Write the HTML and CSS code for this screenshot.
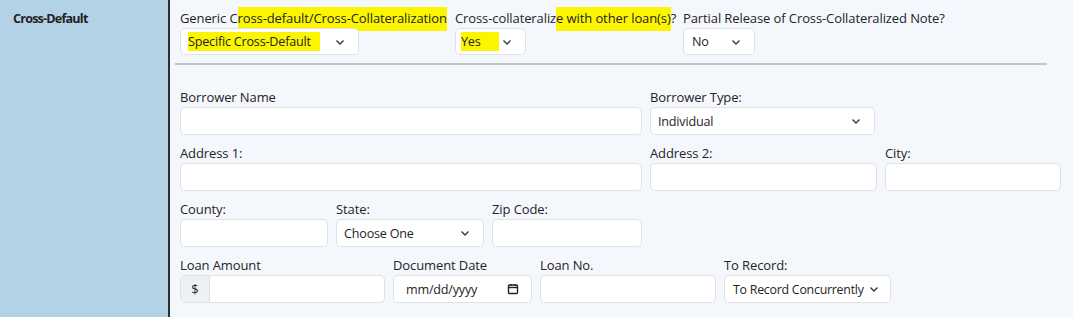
FILE: index.html
```html
<!DOCTYPE html>
<html>
<head>
<meta charset="utf-8">
<link rel="stylesheet" href="styles.css">
</head>
<body>
<div class="row-wrap">
  <div class="side"><span class="side-title">Cross-Default</span></div>
  <div class="main">
    <div class="top">
      <div class="fld w1">
        <div class="lbl">Generic C<mark class="hl hl-a">ross-default/Cross-Collateralization</mark></div>
        <div class="sel s1"><mark class="hl hl-in">Specific Cross-Default&nbsp;&nbsp;&nbsp;</mark><svg class="chev" viewBox="0 0 12 12"><path d="M2.5 4.5 6 8l3.5-3.5"/></svg></div>
      </div>
      <div class="fld w2">
        <div class="lbl">Cross-collateraliz<mark class="hl hl-b">e with other loan(s)</mark>?</div>
        <div class="sel s2"><mark class="hl hl-in">Yes&nbsp;&nbsp;&nbsp;&nbsp;&nbsp;&nbsp;</mark><svg class="chev" viewBox="0 0 12 12"><path d="M2.5 4.5 6 8l3.5-3.5"/></svg></div>
      </div>
      <div class="fld">
        <div class="lbl">Partial Release of Cross-Collateralized Note?</div>
        <div class="sel s3"><span>No</span><svg class="chev" viewBox="0 0 12 12"><path d="M2.5 4.5 6 8l3.5-3.5"/></svg></div>
      </div>
    </div>
    <hr class="rule">
    <div class="grid">
      <div class="frow">
        <div class="fld" style="width:462px"><div class="lbl">Borrower Name</div><div class="inp"></div></div>
        <div class="fld" style="width:225px"><div class="lbl">Borrower Type:</div><div class="sel"><span>Individual</span><svg class="chev" viewBox="0 0 12 12"><path d="M2.5 4.5 6 8l3.5-3.5"/></svg></div></div>
      </div>
      <div class="frow">
        <div class="fld" style="width:462px"><div class="lbl">Address 1:</div><div class="inp"></div></div>
        <div class="fld" style="width:227px"><div class="lbl">Address 2:</div><div class="inp"></div></div>
        <div class="fld" style="width:176px"><div class="lbl">City:</div><div class="inp"></div></div>
      </div>
      <div class="frow">
        <div class="fld" style="width:148px"><div class="lbl">County:</div><div class="inp"></div></div>
        <div class="fld" style="width:148px"><div class="lbl">State:</div><div class="sel"><span>Choose One</span><svg class="chev" viewBox="0 0 12 12"><path d="M2.5 4.5 6 8l3.5-3.5"/></svg></div></div>
        <div class="fld" style="width:150px"><div class="lbl">Zip Code:</div><div class="inp"></div></div>
      </div>
      <div class="frow">
        <div class="fld" style="width:205px"><div class="lbl">Loan Amount</div><div class="igroup"><span class="addon">$</span><span class="ig-inp"></span></div></div>
        <div class="fld" style="width:139px"><div class="lbl">Document Date</div><div class="inp date"><span>mm/dd/yyyy</span><svg class="cal" viewBox="0 0 12 12"><rect x="1.5" y="2" width="9" height="8.5" rx="1"/><path d="M1.5 4.5h9"/><path d="M4 1v2M8 1v2"/></svg></div></div>
        <div class="fld" style="width:176px"><div class="lbl">Loan No.</div><div class="inp"></div></div>
        <div class="fld" style="width:167px"><div class="lbl">To Record:</div><div class="sel s-rec"><span>To Record Concurrently</span><svg class="chev" viewBox="0 0 12 12"><path d="M2.5 4.5 6 8l3.5-3.5"/></svg></div></div>
      </div>
    </div>
  </div>
</div>
</body>
</html>
```
FILE: styles.css
```css
* { box-sizing: border-box; }
html, body { margin: 0; padding: 0; }
body {
  font-family: "Open Sans", "Noto Sans", sans-serif;
  font-size: 13px;
  color: #1f2327;
  background: #f4f8fc;
  width: 1073px;
  height: 317px;
  overflow: hidden;
}
.row-wrap { display: flex; height: 317px; }
.side {
  width: 170px;
  background: #b3d2e5;
  border-right: 2px solid #2b2f33;
  padding: 9px 13px;
  flex: none;
}
.side-title { font-weight: 700; font-size: 12.6px; line-height: 20px; letter-spacing: -0.8px; }
.main { flex: 1; padding: 8px 11px 0 10px; }
.top { display: flex; gap: 8px; }
.w1 { width: 267px; }
.w2 { width: 220px; }
.lbl { line-height: 20px; white-space: nowrap; letter-spacing: -0.1px; }
.hl { background: #fbf500; color: inherit; }
.hl-a { padding: 2px 0 4px; }
.hl-b { padding: 2px 0 4px; }
.hl-in { padding: 1px 0; }
.sel, .inp {
  height: 27px;
  background: #fff;
  border: 1px solid #dee2e6;
  border-radius: 5px;
  display: flex;
  align-items: center;
  justify-content: space-between;
  padding: 0 12px 0 7px;
  font-size: 12.6px;
  letter-spacing: -0.2px;
  white-space: nowrap;
}
.s1 { width: 179px; }
.s2 { width: 71px; padding-left: 5px; }
.s3 { width: 72px; padding-left: 8px; }
.s-rec { padding: 0 10px 0 8px; font-size: 12.4px; letter-spacing: -0.25px; }
.chev { width: 12px; height: 12px; fill: none; stroke: #343a40; stroke-width: 1.4; flex: none; }
.rule { border: 0; border-top: 2px solid #c3c6c9; margin: 8px 15px 0 -5px; }
.grid { display: flex; flex-direction: column; gap: 8px; padding-top: 22px; }
.frow { display: flex; gap: 8px; }
.fld { display: flex; flex-direction: column; flex: none; }
.frow .inp, .frow .sel, .igroup { height: 28px; }
.igroup {
  display: flex;
  border: 1px solid #dee2e6;
  border-radius: 5px;
  overflow: hidden;
  background: #fff;
}
.addon {
  width: 29px;
  background: #eef1f4;
  border-right: 1px solid #dee2e6;
  display: flex;
  align-items: center;
  justify-content: center;
}
.ig-inp { flex: 1; }
.date { padding: 0 12px 0 12px; }
.cal { width: 12px; height: 12px; fill: none; stroke: #222; stroke-width: 1.4; }
```
